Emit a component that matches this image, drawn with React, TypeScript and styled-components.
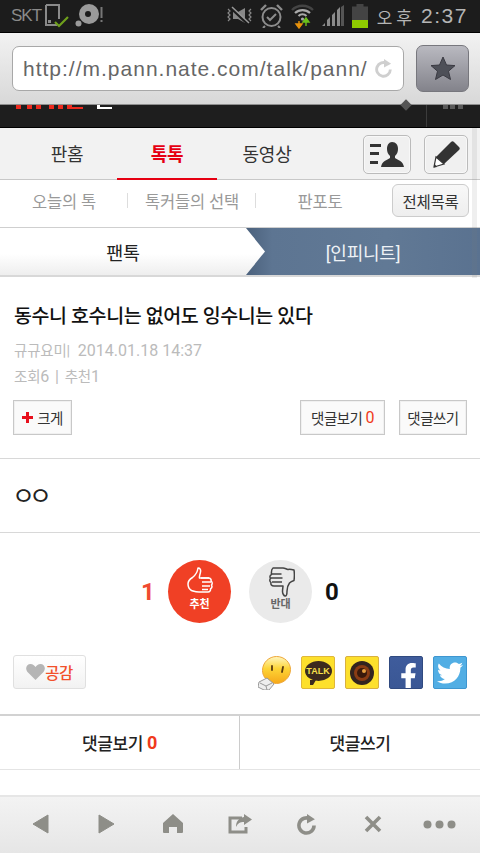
import React from "react";
import styled, { createGlobalStyle } from "styled-components";
import { FaTwitter, FaFacebookF } from "react-icons/fa";

const KR = `Roboto, "Noto Sans CJK KR", sans-serif`;

const Global = createGlobalStyle`
  html, body { margin: 0; padding: 0; background: #fff; }
  * { box-sizing: border-box; }
`;

const Page = styled.div`
  position: relative;
  width: 480px;
  height: 853px;
  overflow: hidden;
  display: flex;
  flex-direction: column;
  background: #fff;
  font-family: ${KR};
`;

const StatusBar = styled.div`
  height: 32px;
  flex: none;
  background: #1c1c1c;
  display: flex;
  align-items: center;
  padding: 0 14px 0 11px;
  color: #999;
`;
const Carrier = styled.span`
  font: 400 17px "Liberation Sans", sans-serif;
  letter-spacing: -1px;
  color: #8a8a8a;
  margin-right: 3px;
`;
const StatusGroup = styled.div<{ $gap: number }>`
  display: flex;
  align-items: center;
  gap: ${(p) => p.$gap}px;
`;
const Spacer = styled.div`
  flex: 1;
`;
const Ampm = styled.span`
  font: 400 17px "Noto Sans CJK KR", sans-serif;
  letter-spacing: 4px;
  color: #b5b5b5;
  margin-left: 9px;
  margin-right: 5px;
`;
const Clock = styled.span`
  width: 45px;
  font: 400 21px "Liberation Sans", sans-serif;
  letter-spacing: 1.5px;
  white-space: nowrap;
  color: #b5b5b5;
`;

const UrlBar = styled.div`
  height: 73px;
  flex: none;
  border-top: 1px solid #000;
  border-bottom: 1px solid #8e8e8e;
  background: linear-gradient(#f2f2f2, #d8d8d8);
  display: flex;
  align-items: center;
  padding: 0 11px 0 12px;
  gap: 12px;
`;
const UrlField = styled.div`
  flex: 1;
  height: 45px;
  background: #fff;
  border: 1px solid #a8a8a8;
  border-radius: 7px;
  display: flex;
  align-items: center;
  padding: 0 10px 0 10px;
  justify-content: space-between;
`;
const UrlText = styled.span`
  font: 400 21px "Liberation Sans", sans-serif;
  letter-spacing: 1px;
  color: #666;
  white-space: nowrap;
`;
const StarButton = styled.div`
  width: 53px;
  height: 47px;
  border-radius: 7px;
  border: 1px solid #77777d;
  background: linear-gradient(#b9b9c0, #83838b);
  display: flex;
  align-items: center;
  justify-content: center;
`;

const SiteStrip = styled.div`
  height: 23px;
  flex: none;
  background: #1e1e1e;
  display: flex;
  padding-left: 15px;
  border-bottom: 1px solid #000;
`;
const LogoCrop = styled.svg`
  flex: none;
`;
const SiteMark = styled.span`
  width: 15px;
  height: 4px;
  margin-left: 12px;
  border-bottom: 2px solid #fff;
  border-left: 3px solid #fff;
`;
const StripDiamond = styled.span`
  width: 8px;
  height: 8px;
  background: #555;
  transform: rotate(45deg);
  margin: -4px 0 0 290px;
`;
const StripDivider = styled.span`
  width: 1px;
  background: #3c3c3c;
  margin-left: 16px;
`;
const StripDots = styled.span`
  width: 20px;
  height: 4px;
  margin-left: 16px;
  background: repeating-linear-gradient(90deg, #5a5a5a 0 5px, transparent 5px 7.5px);
`;

const MainNav = styled.nav`
  height: 52px;
  flex: none;
  background: #f2f2f2;
  border-bottom: 1px solid #c8c8c8;
  display: flex;
  padding-left: 17px;
  padding-right: 12px;
  align-items: stretch;
`;
const NavTab = styled.div<{ $active?: boolean }>`
  width: 100px;
  display: flex;
  align-items: center;
  justify-content: center;
  font-size: 18px;
  font-weight: ${(p) => (p.$active ? 700 : 400)};
  color: ${(p) => (p.$active ? "#e60012" : "#333")};
  letter-spacing: -0.2px;
  margin-bottom: -1px;
  border-bottom: 2px solid ${(p) => (p.$active ? "#e60012" : "transparent")};
`;
const NavIcon = styled.div<{ $w: number; $ml: number }>`
  width: ${(p) => p.$w}px;
  height: 39px;
  margin-left: ${(p) => p.$ml}px;
  margin-top: 7px;
  border: 1px solid #bbb;
  border-radius: 5px;
  background: #f0f0f0;
  box-shadow: inset 0 0 0 1px #f8f8f8;
  display: flex;
  align-items: center;
  justify-content: center;
`;

const SubNav = styled.div`
  height: 47px;
  flex: none;
  background: #fff;
  display: flex;
  align-items: center;
  padding: 0 11px 6px 0;
`;
const SubItem = styled.div<{ $line?: boolean }>`
  width: 128px;
  text-align: center;
  font-size: 16.5px;
  color: #999;
  letter-spacing: -0.2px;
  background: ${(p) =>
    p.$line
      ? "linear-gradient(#ddd, #ddd) right center / 1px 15px no-repeat"
      : "none"};
`;
const AllButton = styled.div`
  margin-left: auto;
  width: 77px;
  height: 33px;
  border: 1px solid #ccc;
  border-radius: 6px;
  background: linear-gradient(#f8f8f8, #eee);
  display: flex;
  align-items: center;
  justify-content: center;
  font-size: 15.5px;
  font-weight: 400;
  letter-spacing: -0.3px;
  color: #333;
`;

const TabRow = styled.div`
  height: 50px;
  flex: none;
  display: flex;
  border-top: 1px solid #cfcfcf;
  border-bottom: 2px solid #d8d8d8;
`;
const TabLeft = styled.div`
  width: 246px;
  padding-top: 1px;
  background: linear-gradient(#fff 55%, #eee);
  display: flex;
  align-items: center;
  justify-content: center;
  font-size: 18.5px;
  font-weight: 400;
  color: #222;
  letter-spacing: -0.3px;
`;
const TabRight = styled.div`
  position: relative;
  flex: 1;
  padding-top: 1px;
  background: linear-gradient(90deg, #4b617c, #5d7592 26px, #617995 60%, #5a7290);
  display: flex;
  align-items: center;
  justify-content: center;
  font-size: 18px;
  color: #eef2f6;
  letter-spacing: -0.2px;
  &::before {
    content: "";
    position: absolute;
    left: 0;
    top: 0;
    bottom: 0;
    width: 19px;
    clip-path: polygon(0 0, 100% 50%, 0 100%);
    background: linear-gradient(#fff 55%, #eee);
  }
`;

const ArticleHead = styled.section`
  height: 182px;
  flex: none;
  padding: 27px 13px 0 14px;
  border-bottom: 1px solid #d8d8d8;
  display: flex;
  flex-direction: column;
`;
const Title = styled.h1`
  margin: 0;
  font-size: 19.5px;
  line-height: 26px;
  font-weight: 500;
  color: #111;
  letter-spacing: -0.4px;
  white-space: nowrap;
`;
const Meta = styled.div<{ $mt: number; $wide?: boolean }>`
  margin-top: ${(p) => p.$mt}px;
  font-size: 16px;
  line-height: 20px;
  color: #bbb;
  white-space: pre;
  word-spacing: ${(p) => (p.$wide ? "1px" : 0)};
  letter-spacing: ${(p) => (p.$wide ? "0.4px" : 0)};
`;
const MetaKo = styled.span`
  font-size: 14.5px;
  letter-spacing: -0.2px;
`;
const ActionLine = styled.div`
  display: flex;
  margin-top: 12px;
  margin-left: -1px;
  gap: 14px;
`;
const SmallButton = styled.div<{ $w: number; $auto?: boolean }>`
  width: ${(p) => p.$w}px;
  height: 35px;
  margin-left: ${(p) => (p.$auto ? "auto" : 0)};
  border: 1px solid #c8c8c8;
  box-shadow: inset 0 0 0 1px #f0f0f0;
  background: #fafafa;
  display: flex;
  align-items: center;
  justify-content: center;
  font-size: 14.5px;
  color: #333;
  letter-spacing: -0.5px;
  gap: 4px;
`;
const Red = styled.span`
  color: #f03a1c;
  font-size: 16px;
  margin-left: -1px;
`;
const RedCount = styled.b`
  color: #f03a1c;
  font-weight: 700;
  margin-left: 4px;
  font-size: 18px;
`;

const Body = styled.div`
  height: 74px;
  flex: none;
  padding: 0 0 3px 12px;
  border-bottom: 1px solid #d8d8d8;
  display: flex;
  align-items: center;
  font-size: 25px;
  color: #222;
  letter-spacing: -6px;
  font-family: "Noto Sans CJK KR", sans-serif;
`;

const VoteRow = styled.div`
  height: 117px;
  flex: none;
  padding-top: 27px;
  display: flex;
  justify-content: center;
  align-items: flex-start;
`;
const VoteCount = styled.span<{ $color: string; $side: "l" | "r" }>`
  width: 22px;
  line-height: 64px;
  text-align: center;
  font-size: 24px;
  font-weight: 700;
  color: ${(p) => p.$color};
  margin-right: ${(p) => (p.$side === "l" ? "9px" : 0)};
  margin-left: ${(p) => (p.$side === "r" ? "9px" : 0)};
`;
const VoteCircle = styled.div<{ $on?: boolean }>`
  width: 63px;
  height: 63px;
  border-radius: 50%;
  margin-right: ${(p) => (p.$on ? "18px" : 0)};
  background: ${(p) => (p.$on ? "#f04025" : "#eaeaea")};
  color: ${(p) => (p.$on ? "#fff" : "#666")};
  display: flex;
  flex-direction: column;
  align-items: center;
  font-size: 11px;
  font-weight: 700;
  line-height: 12px;
  padding-top: 7px;
  gap: 2px;
`;

const ShareRow = styled.div`
  height: 66px;
  flex: none;
  padding: 5px 13px 0 13px;
  border-bottom: 2px solid #d2d2d2;
  display: flex;
  align-items: flex-start;
`;
const LikeButton = styled.div`
  width: 73px;
  height: 34px;
  border: 1px solid #e0e0e0;
  border-radius: 3px;
  background: linear-gradient(#fff, #f2f2f2);
  display: flex;
  align-items: center;
  justify-content: center;
  font-size: 15.5px;
  font-weight: 500;
  color: #f2502a;
  letter-spacing: -0.6px;
`;
const ShareIcons = styled.div`
  margin-left: auto;
  display: flex;
  gap: 10px;
  align-items: flex-start;
  margin-top: 1px;
`;
const ShareTile = styled.div<{ $bg: string; $line: string }>`
  width: 34px;
  height: 33px;
  border: 1px solid ${(p) => p.$line};
  border-radius: 2px;
  background: ${(p) => p.$bg};
  display: flex;
  align-items: center;
  justify-content: center;
  overflow: hidden;
  color: #fff;
`;
const KakaoBubble = styled.div`
  position: relative;
  width: 27px;
  height: 20px;
  border-radius: 50%;
  background: #3c2a1e;
  color: #f8e04a;
  font: 700 9px/20px "Liberation Sans", sans-serif;
  text-align: center;
  margin-top: -4px;
  &::after {
    content: "";
    position: absolute;
    left: 5px;
    bottom: -4px;
    border-left: 3px solid #3c2a1e;
    border-right: 3px solid transparent;
    border-top: 5px solid #3c2a1e;
  }
`;
const FacebookGlyph = styled(FaFacebookF)`
  margin-top: 7px;
  margin-left: 4px;
`;

const CommentBar = styled.div`
  height: 54px;
  flex: none;
  display: flex;
  border-bottom: 1px solid #e4e4e4;
`;
const CommentCell = styled.div<{ $line?: boolean }>`
  flex: ${(p) => (p.$line ? "0 0 240px" : 1)};
  border-right: ${(p) => (p.$line ? "1px solid #ccc" : "none")};
  display: flex;
  align-items: center;
  justify-content: center;
  font-size: 17px;
  font-weight: 500;
  color: #222;
  letter-spacing: -0.4px;
`;

const Gap = styled.div`
  height: 25px;
  flex: none;
  background: #fff;
`;
const Toolbar = styled.div`
  flex: 1;
  border-top: 2px solid #e6e6e6;
  background: linear-gradient(#f3f3f3, #e6e6e6);
  display: flex;
  align-items: center;
  padding: 0 7px 2px;
`;
const ToolCell = styled.div`
  flex: 1;
  display: flex;
  justify-content: center;
`;
const ScrollHint = styled.div`
  position: absolute;
  right: 3px;
  top: 128px;
  width: 5px;
  height: 150px;
  background: rgba(120, 120, 120, 0.12);
`;

const Doc = () => (
  <svg width="26" height="24" viewBox="0 0 26 24">
    <path d="M2 1h13v14M2 1v20h11" fill="none" stroke="#8a8a8a" strokeWidth="2" />
    <rect x="4" y="16" width="3" height="3" fill="#8a8a8a" />
    <path d="M11 18l4 4 9-9" fill="none" stroke="#6fa01c" strokeWidth="2.2" />
  </svg>
);
const Disc = () => (
  <svg width="28" height="24" viewBox="0 0 28 24">
    <circle cx="14" cy="10" r="10" fill="#9a9a9a" />
    <circle cx="13" cy="10" r="3" fill="#1c1c1c" />
    <circle cx="3.5" cy="19.5" r="3" fill="#9a9a9a" />
    <rect x="25.5" y="3" width="2" height="11" fill="#777" />
    <rect x="25.5" y="16" width="2" height="2" fill="#777" />
  </svg>
);
const Vibrate = () => (
  <svg width="25" height="20" viewBox="0 0 25 20">
    <path d="M1 3l2 2-2 2 2 2-2 2 2 2-2 2M24 3l-2 2 2 2-2 2 2 2-2 2 2 2" fill="none" stroke="#888" strokeWidth="1.2" />
    <path d="M6 6l5 0 7-4v15l-7-4H6z" fill="#888" />
    <path d="M4 2l17 16" stroke="#1c1c1c" strokeWidth="3" />
    <path d="M5 1l17 16" stroke="#999" strokeWidth="1.5" />
  </svg>
);
const Alarm = () => (
  <svg width="23" height="24" viewBox="0 0 23 24">
    <circle cx="11.5" cy="13" r="9" fill="none" stroke="#8c8c8c" strokeWidth="2" />
    <path d="M7 13l3 3 6-6" fill="none" stroke="#8c8c8c" strokeWidth="2" />
    <path d="M1 6l5-5M22 6l-5-5" stroke="#8c8c8c" strokeWidth="2.4" />
    <path d="M5 22l-2 2M18 22l2 2" stroke="#8c8c8c" strokeWidth="2" />
  </svg>
);
const Wifi = () => (
  <svg width="23" height="26" viewBox="0 0 23 26">
    <path d="M1 7a15 15 0 0 1 21 0" fill="none" stroke="#444" strokeWidth="2.4" />
    <path d="M4 10a11 11 0 0 1 15 0" fill="none" stroke="#aaa" strokeWidth="2.2" />
    <path d="M7.5 13a6 6 0 0 1 8 0" fill="none" stroke="#aaa" strokeWidth="2.2" />
    <circle cx="11.5" cy="16" r="1.6" fill="#aaa" />
    <path d="M8 18v5M5 21l3 4 3-4z" stroke="#e8920c" fill="#e8920c" strokeWidth="1.4" />
    <path d="M15 23v-6M12 19l3-4 3 4z" stroke="#6cc01c" fill="#6cc01c" strokeWidth="1.4" />
  </svg>
);
const Signal = () => (
  <svg width="22" height="22" viewBox="0 0 22 22">
    <path d="M0 21l3-3v3zM5 21v-6l3-3v9zM10 21V10l3-3v14zM15 21V5l3-3v19z" fill="#8a8a8a" />
    <path d="M19 21V2l3-2v21z" fill="#555" />
  </svg>
);
const Battery = () => (
  <svg width="16" height="24" viewBox="0 0 16 24">
    <rect x="4.5" y="0" width="7" height="3" fill="#444" />
    <rect x="0" y="2.5" width="16" height="21" fill="#444" />
    <rect x="0" y="16" width="16" height="8" fill="#8ecb00" />
  </svg>
);
const Reload = ({ c, s, w }: { c: string; s: number; w: number }) => (
  <svg width={s} height={s} viewBox="0 0 20 20">
    <path d="M13.8 4.8A7.2 7.2 0 1 0 17.2 11" fill="none" stroke={c} strokeWidth={w} />
    <path d="M10.5 0l7.5 5-7.5 4z" fill={c} />
  </svg>
);
const Star = () => (
  <svg width="26" height="25" viewBox="0 0 26 25">
    <path d="M13 1l3.500 8 8.500.6-6.500 5.600 2 8.300L13 19l-7.500 4.500 2-8.300L1 9.600 9.500 9z" fill="#4e5058" stroke="#3a3a42" strokeWidth="1" />
  </svg>
);
const People = () => (
  <svg width="34" height="26" viewBox="0 0 34 26">
    <path d="M0 2h11v3H0zM0 10h9v3H0zM0 19h8v3H0z" fill="#333" />
    <path d="M22 0c4 0 6 3 6 7 0 3-1 5-3 7v2c3 2 8 3 9 9H11c1-6 6-7 9-9v-2c-2-2-3-4-3-7 0-4 2-7 5-7z" fill="#333" />
  </svg>
);
const Pencil = () => (
  <svg width="27" height="27" viewBox="0 0 27 27">
    <path d="M18 1c1-1 2-1 3 0l5 5c1 1 1 2 0 3L11 23l-8-7z" fill="#333" />
    <path d="M3 16l8 7-10 3z" fill="#fff" stroke="#333" strokeWidth="1.2" />
    <path d="M1 22l3 4-3 .5z" fill="#333" />
  </svg>
);
const Plus = () => (
  <svg width="11" height="11" viewBox="0 0 11 11">
    <path d="M4 0h3v4h4v3H7v4H4V7H0V4h4z" fill="#e8101c" />
  </svg>
);
const ThumbUp = () => (
  <svg width="26" height="30" viewBox="0 0 26 30">
    <path
      d="M11 1c2 0 3 1.500 2.500 4-.4 2.500-1.500 4.500-1 6h9c2 0 3 1.500 2.500 3 1.500 1 1.500 3 .5 4 .8 1.500.3 3-1 3.800.3 1.700-.8 3.200-2.500 3.200H12c-4 0-5.500-1-7.500-1.500C2 22 1 19.500 1 17c0-3 2-5 4.500-6.500C8 8.500 10.500 5 11 1z"
      fill="none" stroke="#fff" strokeWidth="1.500" strokeLinejoin="round"
    />
    <path d="M14 11h8M15 15h9M15 19h8M15 22.500h6" stroke="#fff" strokeWidth="1.300" />
  </svg>
);
const ThumbDown = () => (
  <svg width="28" height="30" viewBox="0 0 28 30">
    <path
      d="M6 1h10c2 .2 3 1 5 1.500 1.500-.5 4 0 6 .5.500 3 .5 7 0 10.500-1.500.5-3.500 1.500-4.500 2.500-1.500 2-2.500 4.500-2.500 8 0 2-.5 5-1.700 5-1.500 0-2.800-2.500-2.800-4.500 0-2 .5-4.500 .5-5.500H7c-2.500 0-3.500-1.500-3-3.500-1.500-1-1.500-3-.5-4C2.500 10 3 8 4.500 7.500 4.200 4.500 4.500 2 6 1z"
      fill="none" stroke="#444" strokeWidth="1.500" strokeLinejoin="round"
    />
    <path d="M4.500 7h10M3.500 11h12M5 15h10" stroke="#444" strokeWidth="1.300" />
  </svg>
);
const Heart = () => (
  <svg width="19" height="16" viewBox="0 0 19 16">
    <path d="M9.500 16L1.500 8C-1.500 4 1 0 4.500 0c2.300 0 4 1.500 5 3 1-1.500 2.700-3 5-3C18 0 20.500 4 17.500 8z" fill="#b5b5b5" />
  </svg>
);
const Smiley = () => (
  <svg width="33" height="34" viewBox="0 0 33 34">
    <defs>
      <linearGradient id="smile" x1="0" y1="0" x2="0" y2="1">
        <stop offset="0" stopColor="#fff6c0" />
        <stop offset="0.45" stopColor="#fdd436" />
        <stop offset="1" stopColor="#f6a81a" />
      </linearGradient>
    </defs>
    <path d="M18.500 .5c8 0 14 6 14 13 0 8-7 14-14 14-2.500 0-5-.7-7-2-4-2-7-6-7-11 0-8 6.500-14 14-14z" fill="url(#smile)" stroke="#eea73a" />
    <path d="M14 10v4M25 11l-1 5" stroke="#5a3a10" strokeWidth="1.800" strokeLinecap="round" />
    <path d="M1 26l8-4 7 6-5 6H6l-6-3z" fill="#eee" stroke="#999" />
    <path d="M2 27l6 3 6-3M8 30l1 4" fill="none" stroke="#999" />
  </svg>
);
const Lens = () => (
  <svg width="24" height="24" viewBox="0 0 24 24">
    <circle cx="12" cy="12" r="12" fill="#33241f" />
    <circle cx="12" cy="12" r="8" fill="#8a3c14" />
    <circle cx="12" cy="12" r="5" fill="#3a1a0c" />
    <circle cx="14" cy="10" r="2" fill="#e8a040" />
  </svg>
);
const NavArrow = ({ d }: { d: "l" | "r" }) => (
  <svg width="17" height="20" viewBox="0 0 17 20">
    <path d={d === "l" ? "M16 1v18L1 10z" : "M1 1v18l15-9z"} fill="#8e8e88" stroke="#8e8e88" strokeLinejoin="round" />
  </svg>
);
const HomeIcon = () => (
  <svg width="20" height="20" viewBox="0 0 20 20">
    <path d="M10 0l10 9v9a1 1 0 0 1-1 1h-5v-6H6v6H1a1 1 0 0 1-1-1V9z" fill="#8e8e88" />
  </svg>
);
const ShareIcon = () => (
  <svg width="24" height="20" viewBox="0 0 24 20">
    <path d="M14 4H2v14h16v-5" fill="none" stroke="#8e8e88" strokeWidth="3" />
    <path d="M16 0l8 5.500-8 5.500V8c-4 0-6 1-8 5 0-6 3-9 8-10z" fill="#8e8e88" />
  </svg>
);
const CloseIcon = () => (
  <svg width="18" height="18" viewBox="0 0 18 18">
    <path d="M2 2l14 14M16 2L2 16" stroke="#8e8e88" strokeWidth="3.600" />
  </svg>
);
const MoreIcon = () => (
  <svg width="33" height="9" viewBox="0 0 33 9">
    <circle cx="4.500" cy="4.500" r="4" fill="#8e8e88" />
    <circle cx="16.500" cy="4.500" r="4" fill="#8e8e88" />
    <circle cx="28.500" cy="4.500" r="4" fill="#8e8e88" />
  </svg>
);

export default function App() {
  return (
    <Page>
      <Global />
      <StatusBar>
        <Carrier>SKT</Carrier>
        <StatusGroup $gap={5}>
          <Doc />
          <Disc />
        </StatusGroup>
        <Spacer />
        <StatusGroup $gap={8}>
          <Vibrate />
          <Alarm />
          <Wifi />
          <Signal />
          <Battery />
        </StatusGroup>
        <Ampm>오후</Ampm>
        <Clock>2:37</Clock>
      </StatusBar>
      <UrlBar>
        <UrlField>
          <UrlText>http://m.pann.nate.com/talk/pann/</UrlText>
          <Reload c="#cfcfcf" s={19} w={3} />
        </UrlField>
        <StarButton>
          <Star />
        </StarButton>
      </UrlBar>
      <SiteStrip>
        <LogoCrop width="70" height="4" viewBox="0 0 70 4">
          <path d="M1 0h5v4H1zM12 0h5v4h-5zM21 0h5v4h-5zM34 0h5v4h-5zM43 0h5v4h-5zM52 2h16v2H52zM52 0h5v2h-5z" fill="#ee2a1e" />
        </LogoCrop>
        <SiteMark />
        <StripDiamond />
        <StripDivider />
        <StripDots />
      </SiteStrip>
      <MainNav>
        <NavTab>판홈</NavTab>
        <NavTab $active>톡톡</NavTab>
        <NavTab>동영상</NavTab>
        <NavIcon $w={48} $ml={46}>
          <People />
        </NavIcon>
        <NavIcon $w={44} $ml={13}>
          <Pencil />
        </NavIcon>
      </MainNav>
      <SubNav>
        <SubItem $line>오늘의 톡</SubItem>
        <SubItem $line>톡커들의 선택</SubItem>
        <SubItem>판포토</SubItem>
        <AllButton>전체목록</AllButton>
      </SubNav>
      <TabRow>
        <TabLeft>팬톡</TabLeft>
        <TabRight>[인피니트]</TabRight>
      </TabRow>
      <ArticleHead>
        <Title>동수니 호수니는 없어도 잉수니는 있다</Title>
        <Meta $mt={11}>
          <MetaKo>규규요미|</MetaKo>  2014.01.18 14:37
        </Meta>
        <Meta $mt={5} $wide>
          <MetaKo>조회</MetaKo>6 | <MetaKo>추천</MetaKo>1
        </Meta>
        <ActionLine>
          <SmallButton $w={59}>
            <Plus /> 크게
          </SmallButton>
          <SmallButton $w={85} $auto>
            댓글보기<Red>0</Red>
          </SmallButton>
          <SmallButton $w={68}>댓글쓰기</SmallButton>
        </ActionLine>
      </ArticleHead>
      <Body>ㅇㅇ</Body>
      <VoteRow>
        <VoteCount $color="#f04a30" $side="l">1</VoteCount>
        <VoteCircle $on>
          <ThumbUp />
          추천
        </VoteCircle>
        <VoteCircle>
          <ThumbDown />
          반대
        </VoteCircle>
        <VoteCount $color="#111" $side="r">0</VoteCount>
      </VoteRow>
      <ShareRow>
        <LikeButton>
          <Heart />
          공감
        </LikeButton>
        <ShareIcons>
          <Smiley />
          <ShareTile $bg="#fde02c" $line="#e0b83a">
            <KakaoBubble>TALK</KakaoBubble>
          </ShareTile>
          <ShareTile $bg="#fde02c" $line="#d8b040">
            <Lens />
          </ShareTile>
          <ShareTile $bg="linear-gradient(#3f5c9c,#3a5795)" $line="#304a80">
            <FacebookGlyph size={27} />
          </ShareTile>
          <ShareTile $bg="#52aee4" $line="#3e96d0">
            <FaTwitter size={26} />
          </ShareTile>
        </ShareIcons>
      </ShareRow>
      <CommentBar>
        <CommentCell $line>
          댓글보기<RedCount>0</RedCount>
        </CommentCell>
        <CommentCell>댓글쓰기</CommentCell>
      </CommentBar>
      <Gap />
      <Toolbar>
        <ToolCell><NavArrow d="l" /></ToolCell>
        <ToolCell><NavArrow d="r" /></ToolCell>
        <ToolCell><HomeIcon /></ToolCell>
        <ToolCell><ShareIcon /></ToolCell>
        <ToolCell><Reload c="#8e8e88" s={21} w={3.400} /></ToolCell>
        <ToolCell><CloseIcon /></ToolCell>
        <ToolCell><MoreIcon /></ToolCell>
      </Toolbar>
      <ScrollHint />
    </Page>
  );
}
